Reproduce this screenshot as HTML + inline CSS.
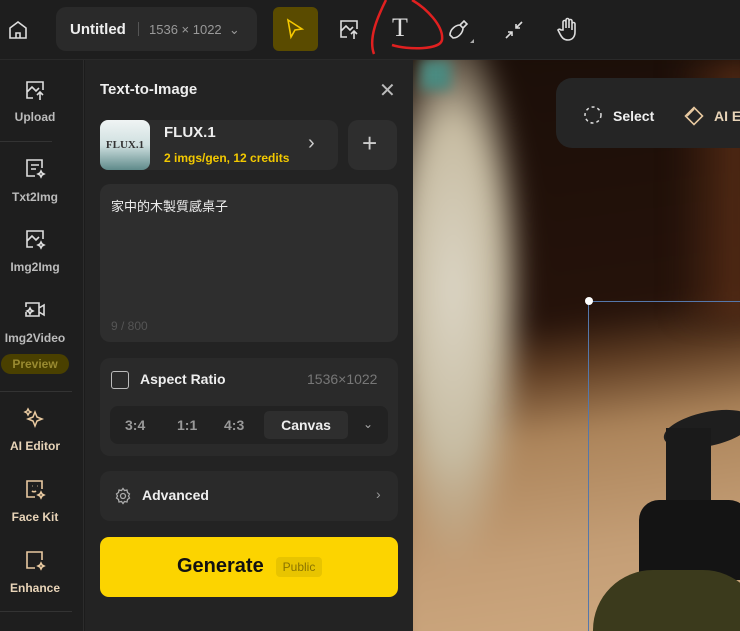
<!DOCTYPE html>
<html><head><meta charset="utf-8"><style>
*{margin:0;padding:0;box-sizing:border-box}
body{width:740px;height:631px;overflow:hidden;background:#1c1c1c;font-family:"Liberation Sans","Noto Sans CJK TC",sans-serif;position:relative;color:#eee}
.a{position:absolute;white-space:nowrap}
.top{left:0;top:0;width:740px;height:60px;background:#1e1e1e;border-bottom:1px solid #2a2a2a}
.nav{left:0;top:60px;width:84px;height:571px;background:#1e1e1e;border-right:1px solid #2c2c2c}
.panel{left:85px;top:60px;width:328px;height:571px;background:#232323}
.card{background:#2e2e2e;border-radius:10px}
.lbl{width:70px;text-align:center;font-size:12px;color:#bbb;font-weight:bold}
.ic{stroke:#ddd;fill:none;stroke-width:1.6}
</style></head><body>
<div class="a top"></div>
<svg class="a" style="left:6px;top:18px" width="24" height="24" viewBox="0 0 24 24"><path class="ic" d="M4 10l8-6 8 6v10H4z M10 20v-5h4v5"/></svg>
<div class="a card" style="left:56px;top:7px;width:201px;height:44px;background:#2a2a2a"></div>
<div class="a" style="left:70px;top:21px;font-size:15px;font-weight:bold;color:#eee">Untitled</div>
<div class="a" style="left:138px;top:22px;width:1px;height:14px;background:#555"></div>
<div class="a" style="left:149px;top:22px;font-size:13px;color:#999">1536 × 1022 &nbsp;⌄</div>
<div class="a" style="left:273px;top:7px;width:45px;height:44px;background:#5a4b00;border-radius:6px"></div>
<svg class="a" style="left:283px;top:17px" width="24" height="24" viewBox="0 0 24 24"><path d="M5 3l14 9-7 1-4 7z" fill="none" stroke="#f5c800" stroke-width="1.6"/></svg>
<svg class="a" style="left:337px;top:17px" width="24" height="24" viewBox="0 0 24 24"><path class="ic" d="M10 20H4V4h16v8 M4 14l5-5 4 4 3-3 M17 22v-8 M14 17l3-3 3 3"/></svg>
<div class="a" style="left:392px;top:13px;font-size:26px;color:#ddd;font-family:'Liberation Serif',serif">T</div>
<svg class="a" style="left:360px;top:0" width="90" height="58" viewBox="0 0 90 58"><path d="M14 54c-6-16 4-38 12-54 M52 0c14 8 32 26 30 40-2 10-34 10-50 5" fill="none" stroke="#e02020" stroke-width="2.5"/></svg>
<svg class="a" style="left:446px;top:17px" width="30" height="30" viewBox="0 0 30 30"><path class="ic" d="M4 18c0-6 6-10 10-10l3 3c0 4-4 10-10 10z M14 8l4-4 3 3-4 4"/><path d="M24 26l4-4v4z" fill="#aaa"/></svg>
<svg class="a" style="left:503px;top:19px" width="22" height="22" viewBox="0 0 22 22"><path class="ic" d="M19 3l-6 6 M13 5v4h4 M3 19l6-6 M5 13h4v4"/></svg>
<svg class="a" style="left:556px;top:16px" width="24" height="26" viewBox="0 0 24 26"><path class="ic" d="M7 14V6a1.5 1.5 0 013 0v6V4a1.5 1.5 0 013 0v8V5a1.5 1.5 0 013 0v9V8a1.5 1.5 0 013 0v8c0 5-3 8-7 8s-6-2-8-6l-2-4c1-1 2-1 3 0z"/></svg>

<div class="a nav"></div>
<div class="a" style="left:0;top:60px;width:84px;height:571px;overflow:hidden">
<svg class="a" style="left:23px;top:18px" width="24" height="24" viewBox="0 0 24 24"><path class="ic" d="M10 20H4V4h16v8 M4 14l5-5 4 4 3-3 M17 22v-8 M14 17l3-3 3 3"/></svg>
<div class="a lbl" style="left:0;top:50px">Upload</div>
<div class="a" style="left:0;top:81px;width:52px;height:1px;background:#333"></div>
<svg class="a" style="left:23px;top:96px" width="24" height="24" viewBox="0 0 24 24"><path class="ic" d="M19 12V4H4v16h8 M8 9h8 M8 13h5 M18 15l1 2 2 1-2 1-1 2-1-2-2-1 2-1z"/></svg>
<div class="a lbl" style="left:0;top:130px">Txt2Img</div>
<svg class="a" style="left:23px;top:167px" width="24" height="24" viewBox="0 0 24 24"><path class="ic" d="M10 20H4V4h16v8 M4 14l5-5 4 4 3-3 M18 15l1 2 2 1-2 1-1 2-1-2-2-1 2-1z"/></svg>
<div class="a lbl" style="left:0;top:200px">Img2Img</div>
<svg class="a" style="left:22px;top:238px" width="26" height="24" viewBox="0 0 26 24"><path class="ic" d="M4 9V5h13v13H4v-4 M17 10l5-3v10l-5-3 M8 10l1 2 2 1-2 1-1 2-1-2-2-1 2-1z"/></svg>
<div class="a lbl" style="left:-2px;top:271px;width:74px">Img2Video</div>
<div class="a" style="left:1px;top:294px;width:68px;height:20px;border-radius:10px;background:#4a4000;color:#998a30;font-size:12px;font-weight:bold;text-align:center;line-height:20px">Preview</div>
<div class="a" style="left:0;top:331px;width:72px;height:1px;background:#333"></div>
<svg class="a" style="left:23px;top:346px" width="24" height="24" viewBox="0 0 24 24"><path d="M12 6l2 5 5 2-5 2-2 5-2-5-5-2 5-2z M5 3l1 2 2 1-2 1-1 2-1-2-2-1 2-1z" fill="none" stroke="#e8c9a0" stroke-width="1.5"/></svg>
<div class="a lbl" style="left:0;top:379px;color:#e8d4b8">AI Editor</div>
<svg class="a" style="left:23px;top:417px" width="24" height="24" viewBox="0 0 24 24"><path d="M19 12V4H4v16h8 M9 9h.5 M14 9h.5 M9 14c1 1 3 1 4 0 M18 15l1 2 2 1-2 1-1 2-1-2-2-1 2-1z" fill="none" stroke="#e8c9a0" stroke-width="1.6"/></svg>
<div class="a lbl" style="left:0;top:450px;color:#e8d4b8">Face Kit</div>
<svg class="a" style="left:23px;top:488px" width="24" height="24" viewBox="0 0 24 24"><path d="M19 12V4H4v16h8 M18 15l1 2 2 1-2 1-1 2-1-2-2-1 2-1z" fill="none" stroke="#e8c9a0" stroke-width="1.6"/></svg>
<div class="a lbl" style="left:0;top:521px;color:#e8d4b8">Enhance</div>
<div class="a" style="left:0;top:551px;width:72px;height:1px;background:#333"></div>
</div>

<div class="a panel"></div>
<div class="a" style="left:100px;top:81px;font-size:15px;font-weight:bold;color:#eee">Text-to-Image</div>
<div class="a" style="left:379px;top:78px;font-size:20px;color:#bbb">✕</div>
<div class="a card" style="left:100px;top:120px;width:238px;height:50px;background:#2c2c2c"></div>
<div class="a" style="left:100px;top:120px;width:50px;height:50px;border-radius:8px;background:linear-gradient(#f0f4f4,#cfe0e0 50%,#5f8a8a);font-family:'Liberation Serif',serif;font-size:11px;color:#333;text-align:center;line-height:50px;font-weight:bold">FLUX.1</div>
<div class="a" style="left:164px;top:124px;font-size:15px;font-weight:bold;color:#eee">FLUX.1</div>
<div class="a" style="left:164px;top:151px;font-size:12px;font-weight:bold;color:#f3c900">2 imgs/gen, 12 credits</div>
<div class="a" style="left:308px;top:132px;font-size:20px;color:#ccc">›</div>
<div class="a card" style="left:348px;top:120px;width:49px;height:50px"></div>
<div class="a" style="left:362px;top:128px;font-size:26px;color:#ccc;font-weight:300">+</div>
<div class="a card" style="left:100px;top:184px;width:298px;height:158px"></div>
<div class="a" style="left:111px;top:196px;font-size:13px;color:#eee">家中的木製質感桌子</div>
<div class="a" style="left:111px;top:319px;font-size:12px;color:#555">9 / 800</div>
<div class="a card" style="left:100px;top:358px;width:298px;height:98px;background:#2a2a2a"></div>
<div class="a" style="left:111px;top:371px;width:18px;height:18px;border:1.5px solid #bbb;border-radius:3px"></div>
<div class="a" style="left:140px;top:371px;font-size:14px;font-weight:bold;color:#eee">Aspect Ratio</div>
<div class="a" style="left:307px;top:371px;font-size:14px;color:#777">1536×1022</div>
<div class="a" style="left:110px;top:406px;width:278px;height:38px;background:#222;border-radius:8px"></div>
<div class="a" style="left:125px;top:417px;font-size:14px;color:#999;font-weight:bold">3:4</div>
<div class="a" style="left:177px;top:417px;font-size:14px;color:#999;font-weight:bold">1:1</div>
<div class="a" style="left:224px;top:417px;font-size:14px;color:#999;font-weight:bold">4:3</div>
<div class="a" style="left:264px;top:411px;width:84px;height:28px;background:#2e2e2e;border-radius:5px;text-align:center;line-height:28px;font-size:14px;font-weight:bold;color:#eee">Canvas</div>
<div class="a" style="left:363px;top:417px;font-size:12px;color:#aaa">⌄</div>
<div class="a card" style="left:100px;top:471px;width:298px;height:50px;background:#2a2a2a"></div>
<svg class="a" style="left:114px;top:487px" width="18" height="18" viewBox="0 0 18 18"><circle cx="9" cy="9" r="2.5" fill="none" stroke="#aaa" stroke-width="1.3"/><path d="M9 1.5l1.5 2 2.5-.5.5 2.5 2 1.5-1 2 1 2-2 1.5-.5 2.5-2.5-.5-1.5 2-1.5-2-2.5.5-.5-2.5-2-1.5 1-2-1-2 2-1.5.5-2.5 2.5.5z" fill="none" stroke="#aaa" stroke-width="1.3"/></svg>
<div class="a" style="left:142px;top:487px;font-size:14px;font-weight:bold;color:#eee">Advanced</div>
<div class="a" style="left:376px;top:486px;font-size:14px;color:#999">›</div>
<div class="a" style="left:100px;top:537px;width:298px;height:60px;background:#fcd400;border-radius:9px"></div>
<div class="a" style="left:177px;top:555px;font-size:20px;font-weight:bold;color:#111">Generate</div>
<div class="a" style="left:276px;top:557px;width:46px;height:20px;background:#e8c400;border-radius:4px;font-size:12px;color:#8a7400;text-align:center;line-height:20px">Public</div>

<div class="a" style="left:413px;top:60px;width:327px;height:571px;overflow:hidden;background:#2a1a10">
<div class="a" style="left:-20px;top:-20px;width:380px;height:620px;filter:blur(12px);background:
radial-gradient(ellipse 75px 280px at 60px 250px,#dcd6c6,#c7bca2 60%,transparent 100%),
linear-gradient(172deg,#1a0e08 0%,#25120a 45%,#5e3c22 52%,#ac845a 62%,#c49e76 80%,#d0ab82 100%)"></div>
<div class="a" style="left:260px;top:0;width:80px;height:260px;filter:blur(12px);background:linear-gradient(90deg,transparent,#5a2e16)"></div>
<div class="a" style="left:8px;top:0;width:30px;height:30px;filter:blur(6px);background:#4a8a80"></div>
<div class="a" style="left:250px;top:352px;width:90px;height:34px;border-radius:50%;background:#1e1e1e;transform:rotate(-12deg)"></div>
<div class="a" style="left:253px;top:368px;width:45px;height:80px;background:#1a1a1a"></div>
<div class="a" style="left:226px;top:440px;width:110px;height:80px;border-radius:20px 20px 0 0;background:#141414"></div>
<div class="a" style="left:180px;top:510px;width:170px;height:120px;border-radius:60px 60px 0 0;background:#3b3a1c"></div>
<div class="a" style="left:175px;top:241px;width:160px;height:1px;background:#5577aa"></div>
<div class="a" style="left:175px;top:241px;width:1px;height:340px;background:#5577aa"></div>
<div class="a" style="left:172px;top:237px;width:8px;height:8px;border-radius:50%;background:#fff"></div>
<div class="a" style="left:143px;top:18px;width:200px;height:70px;background:#252525;border-radius:16px"></div>
<svg class="a" style="left:168px;top:44px" width="24" height="24" viewBox="0 0 24 24"><circle cx="12" cy="11" r="8" fill="none" stroke="#ddd" stroke-width="1.5" stroke-dasharray="3 3"/></svg>
<div class="a" style="left:200px;top:48px;font-size:14px;font-weight:bold;color:#eee">Select</div>
<svg class="a" style="left:270px;top:45px" width="22" height="22" viewBox="0 0 22 22"><rect x="5" y="5" width="12" height="12" transform="rotate(45 11 11)" fill="none" stroke="#e8c9a0" stroke-width="1.6"/><path d="M4 11l7-7" stroke="#e8c9a0" stroke-width="1.6"/></svg>
<div class="a" style="left:301px;top:48px;font-size:14px;font-weight:bold;color:#e8d4b8">AI E</div>
</div>
</body></html>
